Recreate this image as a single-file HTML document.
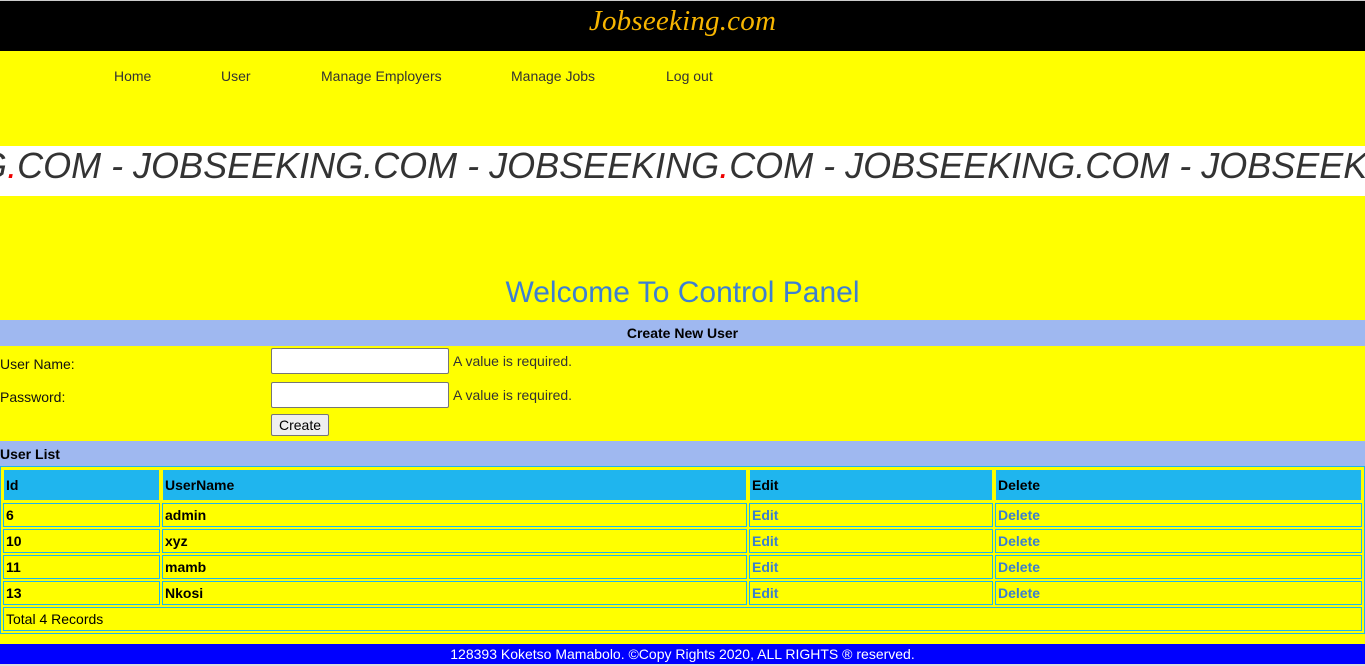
<!DOCTYPE html>
<html><head><meta charset="utf-8"><style>
*{margin:0;padding:0;box-sizing:border-box}
body{width:1365px;height:666px;overflow:hidden;background:#ff0;font-family:"Liberation Sans",Arial,sans-serif;position:relative}
.a{position:absolute}
#top{left:0;top:0;width:1365px;height:1px;background:#ccc}
#hdr{left:0;top:1px;width:1365px;height:50px;background:#000}
#logo{left:0;width:1365px;top:5px;text-align:center;font-family:"Liberation Serif",serif;font-style:italic;font-size:29px;color:#f7b500;letter-spacing:0.2px}
.nav{top:68px;font-size:14px;color:#333}
#mq{left:0;top:146px;width:1365px;height:50px;background:#fff;overflow:hidden}
#mqt{position:absolute;left:-223px;top:0;white-space:nowrap;font-style:italic;font-size:36px;line-height:40px;color:#333}
.r{color:#e00}
#ttl{left:0;width:1365px;top:276px;text-align:center;font-size:30px;color:#3d7fd1}
.bar{left:0;width:1365px;background:#9fb8f0;font-weight:bold;font-size:14px;color:#000}
.lbl{font-size:14px;color:#111}
.inp{width:178px;height:26px;background:#fff;border:1px solid #767676;border-radius:2px}
.req{font-size:14px;color:#333}
#btn{left:271px;top:414px;width:58px;height:22px;background:#efefef;border:1px solid #767676;border-radius:2px;font-size:14px;text-align:center;line-height:20px;color:#000}
table{position:absolute;left:0;top:466px;width:1365px;border:1px solid #1fb5ee;border-collapse:separate;border-spacing:2px 2px;font-size:14px;font-weight:bold}
td{border:1px solid #1fb5ee;padding:0 2px;height:24px;color:#000;line-height:16px}
tr.h td{background:#1fb5ee;border-color:#ff0;height:32px}
td.l{color:#3a7fcf}
#foot{left:0;top:644px;width:1365px;height:20px;background:#00f;color:#fff;text-align:center;font-size:14px;line-height:20px}
#bot{left:0;top:664px;width:1365px;height:2px;background:#ddd}
</style></head><body>
<div class="a" id="top"></div>
<div class="a" id="hdr"></div>
<div class="a" id="logo">Jobseeking.com</div>
<div class="a nav" style="left:114px">Home</div>
<div class="a nav" style="left:221px">User</div>
<div class="a nav" style="left:321px">Manage Employers</div>
<div class="a nav" style="left:511px">Manage Jobs</div>
<div class="a nav" style="left:666px">Log out</div>
<div class="a" id="mq"><div id="mqt">JOBSEEKING<span class="r">.</span>COM - JOBSEEKING.COM - JOBSEEKING<span class="r">.</span>COM - JOBSEEKING.COM - JOBSEEKING<span class="r">.</span>COM - JOBSEEKING.COM</div></div>
<div class="a" id="ttl">Welcome To Control Panel</div>
<div class="a bar" style="top:320px;height:26px;line-height:26px;text-align:center">Create New User</div>
<div class="a lbl" style="left:0;top:356px">User Name:</div>
<div class="a lbl" style="left:0;top:389px">Password:</div>
<div class="a inp" style="left:271px;top:348px"></div>
<div class="a inp" style="left:271px;top:382px"></div>
<div class="a req" style="left:453px;top:353px">A value is required.</div>
<div class="a req" style="left:453px;top:387px">A value is required.</div>
<div class="a" id="btn">Create</div>
<div class="a bar" style="top:441px;height:26px;line-height:26px">User List</div>
<table>
<colgroup><col style="width:157px"><col style="width:585px"><col style="width:244px"><col></colgroup>
<tr class="h"><td>Id</td><td>UserName</td><td>Edit</td><td>Delete</td></tr>
<tr><td>6</td><td>admin</td><td class="l">Edit</td><td class="l">Delete</td></tr>
<tr><td>10</td><td>xyz</td><td class="l">Edit</td><td class="l">Delete</td></tr>
<tr><td>11</td><td>mamb</td><td class="l">Edit</td><td class="l">Delete</td></tr>
<tr><td>13</td><td>Nkosi</td><td class="l">Edit</td><td class="l">Delete</td></tr>
<tr><td colspan="4" style="font-weight:normal">Total 4 Records</td></tr>
</table>
<div class="a" id="foot">128393 Koketso Mamabolo. ©Copy Rights 2020, ALL RIGHTS ® reserved.</div>
<div class="a" id="bot"></div>
</body></html>
